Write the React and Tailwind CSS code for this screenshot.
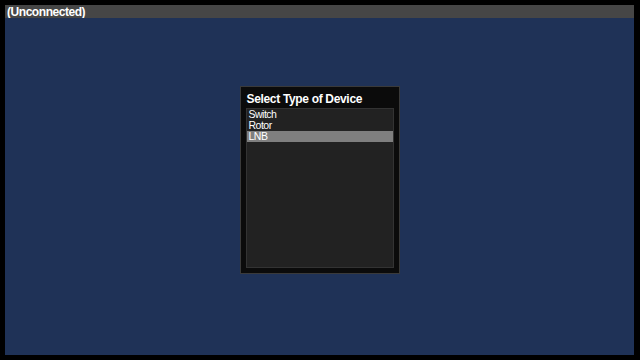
import React, { useState } from 'react';

const devices = ['Switch', 'Rotor', 'LNB'];

const App = () => {
  const [selected, setSelected] = useState(2);

  return (
    <div
      className="w-[640px] h-[360px] bg-black pl-[5px] pt-[5px] pr-[6px] pb-[5px] flex flex-col"
      style={{ fontFamily: '"Liberation Sans", Arial, sans-serif' }}
    >
      <div className="h-[13px] bg-[#464646] flex items-center pl-[2px] text-white font-bold text-[12px] tracking-[-0.45px] leading-none">
        (Unconnected)
      </div>
      <div className="flex-1 bg-[#1f3257] flex justify-center pt-[68px]">
        <div className="w-[160px] h-[188px] bg-[#0b0b0b] border border-[#3a3a3a] flex flex-col px-[5px] pb-[5px]">
          <div className="h-[21px] flex items-center pl-[1px] pt-[3px] text-white font-bold text-[12px] tracking-[-0.33px]">
            Select Type of Device
          </div>
          <div className="flex-1 bg-[#222222] border border-[#333333]">
            {devices.map((d, i) => (
              <div
                key={d}
                onClick={() => setSelected(i)}
                className={`h-[11px] pl-[2px] text-[10.5px] tracking-[-0.5px] leading-[11px] text-white ${
                  selected === i ? 'bg-[#7f7f7f]' : ''
                }`}
              >
                {d}
              </div>
            ))}
          </div>
        </div>
      </div>
    </div>
  );
};

export default App;
